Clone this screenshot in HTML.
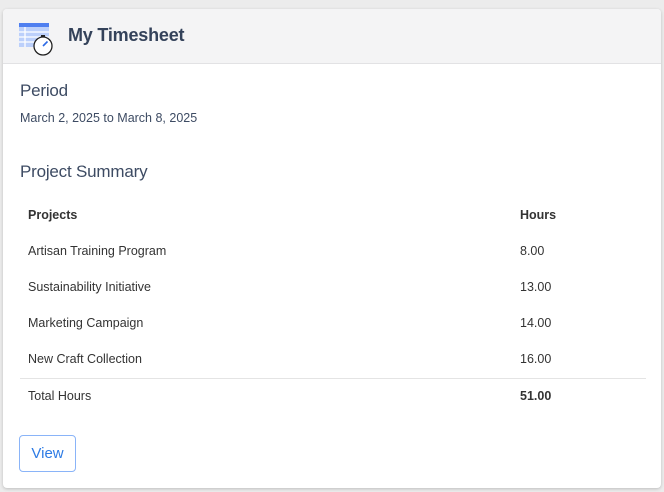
<!DOCTYPE html>
<html><head><style>
body{margin:0;width:664px;height:492px;background:#ececec;font-family:"Liberation Sans",sans-serif;overflow:hidden}
.card{position:absolute;left:3px;top:9px;width:658px;height:479px;background:#fff;border-radius:4px;box-shadow:0 1px 3px rgba(0,0,0,.2);overflow:hidden}
.hd{height:54px;background:#f4f4f5;border-bottom:1px solid #e2e2e4;position:relative}
.hd h1{position:absolute;left:65px;top:16px;margin:0;font-size:18px;font-weight:bold;color:#34425a;letter-spacing:-0.2px}
.icon{position:absolute;left:16px;top:14px}
.t{position:absolute;color:#3d4b63}
.h2{font-size:17px;left:17px;letter-spacing:-0.2px}
.r{position:absolute;font-size:12.5px;color:#333}
.line{position:absolute;left:17px;width:626px;top:369px;height:1px;background:#e4e4e4}
.btn{position:absolute;left:16px;top:426px;width:57px;height:37px;border:1px solid #8ab4f8;border-radius:4px;color:#2d7be5;font-size:15px;text-align:center;line-height:36px;box-sizing:border-box}
</style></head><body>
<div class="card">
<div class="hd">
<svg class="icon" width="40" height="34" viewBox="0 0 40 34">
<rect x="0" y="0" width="30" height="24" fill="#bcd0fb"/>
<rect x="0" y="0" width="30" height="4" fill="#4f7ff0"/>
<g stroke="#fff" stroke-width="1.3"><line x1="0" y1="9" x2="30" y2="9"/><line x1="0" y1="14" x2="30" y2="14"/><line x1="0" y1="19" x2="30" y2="19"/><line x1="6" y1="4" x2="6" y2="24"/></g>
<circle cx="24" cy="23" r="9" fill="#fff" stroke="#222" stroke-width="1.3"/>
<rect x="22" y="12" width="4" height="2" fill="#222"/>
<line x1="24" y1="23" x2="28.5" y2="18.5" stroke="#2d6be5" stroke-width="1.6"/>
</svg>
<h1>My Timesheet</h1>
</div>
<div class="t h2" style="top:72px">Period</div>
<div class="t" style="left:17px;top:102px;font-size:12.5px">March 2, 2025 to March 8, 2025</div>
<div class="t h2" style="top:153px">Project Summary</div>
<div class="r" style="left:25px;top:199px;font-weight:bold">Projects</div>
<div class="r" style="left:517px;top:199px;font-weight:bold">Hours</div>
<div class="r" style="left:25px;top:235px">Artisan Training Program</div><div class="r" style="left:517px;top:235px">8.00</div>
<div class="r" style="left:25px;top:271px">Sustainability Initiative</div><div class="r" style="left:517px;top:271px">13.00</div>
<div class="r" style="left:25px;top:307px">Marketing Campaign</div><div class="r" style="left:517px;top:307px">14.00</div>
<div class="r" style="left:25px;top:343px">New Craft Collection</div><div class="r" style="left:517px;top:343px">16.00</div>
<div class="line"></div>
<div class="r" style="left:25px;top:380px">Total Hours</div><div class="r" style="left:517px;top:380px;font-weight:bold">51.00</div>
<div class="btn">View</div>
</div>
</body></html>
